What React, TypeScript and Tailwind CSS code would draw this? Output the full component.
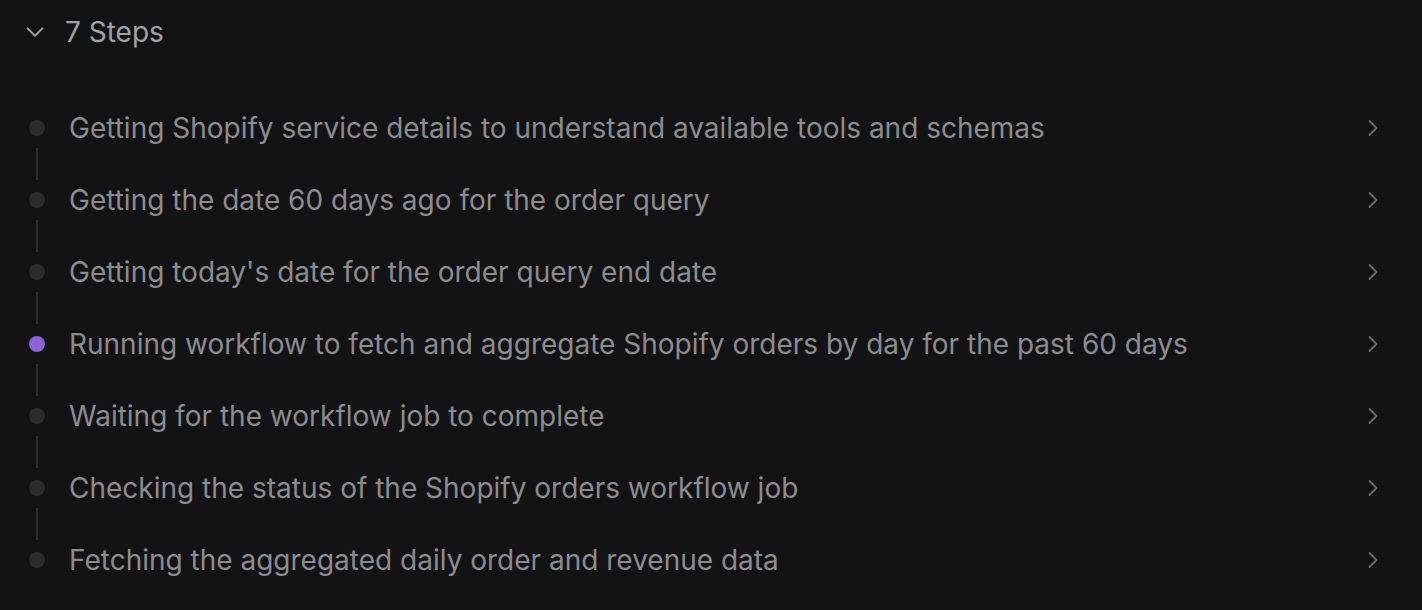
import { ChevronDown, ChevronRight } from "lucide-react";

const steps = [
  { label: "Getting Shopify service details to understand available tools and schemas" },
  { label: "Getting the date 60 days ago for the order query" },
  { label: "Getting today's date for the order query end date" },
  { label: "Running workflow to fetch and aggregate Shopify orders by day for the past 60 days", active: true },
  { label: "Waiting for the workflow job to complete" },
  { label: "Checking the status of the Shopify orders workflow job" },
  { label: "Fetching the aggregated daily order and revenue data" },
];

export default function App() {
  return (
    <div className="min-h-[610px] w-full bg-[#131315] font-['Inter',sans-serif] text-[28px]">
      <div className="flex h-16 items-center gap-[15px] pl-[20px]">
        <ChevronDown className="h-[30px] w-[30px] text-[#9a9a9e]" strokeWidth={1.5} />
        <span className="text-[#a2a2a6]">7 Steps</span>
      </div>
      <div className="mt-[44px] flex flex-col pl-[29px] pr-[35px]">
        {steps.map((step, i) => (
          <div key={i}>
            <div className="flex h-10 items-center">
              <span
                className={
                  step.active
                    ? "h-4 w-4 shrink-0 rounded-full bg-[#8a63d8]"
                    : "h-4 w-4 shrink-0 rounded-full bg-[#2c2c2f]"
                }
              />
              <span className="ml-[24px] flex-1 text-[#8c8c90]">{step.label}</span>
              <ChevronRight className="h-7 w-7 text-[#6e6e72]" strokeWidth={1.6} />
            </div>
            {i < steps.length - 1 && (
              <div className="flex h-8 w-4 justify-center">
                <div className="h-full w-[2px] bg-[#2c2c2f]" />
              </div>
            )}
          </div>
        ))}
      </div>
    </div>
  );
}
